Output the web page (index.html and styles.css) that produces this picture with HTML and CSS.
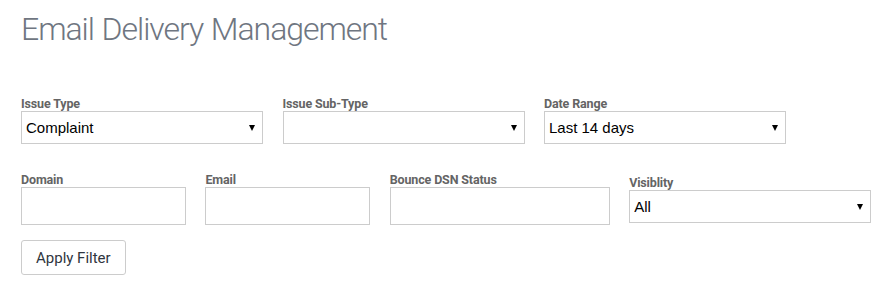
FILE: index.html
```html
<!DOCTYPE html>
<html lang="en">
<head>
<meta charset="utf-8">
<title>Email Delivery Management</title>
<link rel="stylesheet" href="styles.css">
</head>
<body>
<div class="page">
  <h1 class="title">Email Delivery Management</h1>

  <div class="row row-one">
    <div class="field w-select">
      <label class="label">Issue Type</label>
      <div class="select-wrap">
        <select class="select"><option>Complaint</option></select>
        <span class="caret"></span>
      </div>
    </div>
    <div class="field w-select">
      <label class="label">Issue Sub-Type</label>
      <div class="select-wrap">
        <select class="select"><option></option></select>
        <span class="caret"></span>
      </div>
    </div>
    <div class="field w-select">
      <label class="label">Date Range</label>
      <div class="select-wrap">
        <select class="select"><option>Last 14 days</option></select>
        <span class="caret"></span>
      </div>
    </div>
  </div>

  <div class="row row-two">
    <div class="field w-small">
      <label class="label">Domain</label>
      <input class="input" type="text">
    </div>
    <div class="field w-small">
      <label class="label">Email</label>
      <input class="input" type="text">
    </div>
    <div class="field w-mid">
      <label class="label">Bounce DSN Status</label>
      <input class="input" type="text">
    </div>
    <div class="field w-select">
      <label class="label">Visiblity</label>
      <div class="select-wrap">
        <select class="select"><option>All</option></select>
        <span class="caret"></span>
      </div>
    </div>
  </div>

  <button class="btn" type="button">Apply Filter</button>
</div>
</body>
</html>
```

FILE: styles.css
```css
* { box-sizing: border-box; }

body {
  margin: 0;
  background: #ffffff;
  font-family: Roboto, "Liberation Sans", sans-serif;
}

.page {
  padding: 8px 21px 0 21px;
}

.title {
  margin: 0;
  font-family: Roboto, "Liberation Sans", sans-serif;
  font-weight: 300;
  font-size: 32px;
  line-height: 40px;
  letter-spacing: -1.05px;
  word-spacing: 1px;
  color: #6f7681;
  height: 40px;
  position: relative;
  top: 1px;
}

.row {
  display: flex;
  column-gap: 19.5px;
}

.row-one {
  margin-top: 48px;
}

.row-two {
  margin-top: 28px;
  align-items: center;
}

.field {
  display: flex;
  flex-direction: column;
}

.w-select { width: 242px; }
.w-small { width: 165px; }
.w-mid { width: 220px; }

.label {
  display: block;
  font-size: 12.5px;
  font-weight: 700;
  line-height: 15px;
  color: #646464;
  letter-spacing: -0.15px;
}

.select-wrap {
  position: relative;
  height: 33px;
}

.select {
  appearance: none;
  -webkit-appearance: none;
  width: 100%;
  height: 33px;
  margin: 0;
  border: 1px solid #cccccc;
  border-radius: 0;
  background: #ffffff;
  padding: 0 20px 0 4px;
  font-family: "Liberation Sans", Arial, sans-serif;
  font-size: 15px;
  color: #000000;
  outline: none;
}

.caret {
  position: absolute;
  right: 8px;
  top: 14px;
  width: 0;
  height: 0;
  border-left: 3.5px solid transparent;
  border-right: 3.5px solid transparent;
  border-top: 6px solid #000000;
  pointer-events: none;
}

.input {
  width: 100%;
  height: 38px;
  margin: 0;
  border: 1px solid #cccccc;
  border-radius: 0;
  background: #ffffff;
  padding: 0 4px;
  font-size: 15px;
  outline: none;
}

.btn {
  display: block;
  margin-top: 15px;
  height: 35px;
  padding: 0 14px;
  border: 1px solid #cccccc;
  border-radius: 3px;
  background: #ffffff;
  font-family: Roboto, "Liberation Sans", sans-serif;
  font-size: 15px;
  color: #2f3640;
}
```
